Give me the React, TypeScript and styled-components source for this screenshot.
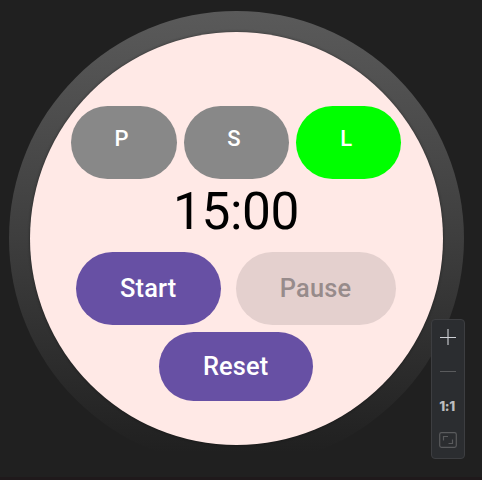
import React from "react";
import styled, { createGlobalStyle } from "styled-components";

const GlobalStyle = createGlobalStyle`
  * { box-sizing: border-box; }
  body { margin: 0; background: #202020; overflow: hidden; }
`;

const Preview = styled.main`
  position: relative;
  width: 482px;
  height: 480px;
  padding: 11px 0 0 9px;
  background: #202020;
  border-bottom: 3px solid #1f191b;
  font-family: Roboto, "Liberation Sans", sans-serif;
`;

const Bezel = styled.div`
  width: 455px;
  height: 455px;
  padding: 21px;
  border-radius: 50%;
  background: linear-gradient(180deg, #5a5a5a 0%, #3e3e3e 50%, #202020 97%);
`;

const Face = styled.section`
  width: 413px;
  height: 413px;
  padding: 73.6px 1px 0 0;
  border-radius: 50%;
  background: #ffe9e6;
  box-shadow: 0 0 3px rgba(0, 0, 0, 0.45);
  display: flex;
  flex-direction: column;
  align-items: center;
`;

const Row = styled.div<{ $gap: number }>`
  display: flex;
  gap: ${(p) => p.$gap}px;
`;

const Pill = styled.button<{ $w: number; $h: number; $bg: string; $color?: string }>`
  width: ${(p) => p.$w}px;
  height: ${(p) => p.$h}px;
  flex: none;
  padding: 0 0.6px 0.6px 0;
  border: 0;
  border-radius: 37px;
  display: flex;
  align-items: center;
  justify-content: center;
  background: ${(p) => p.$bg};
  color: ${(p) => p.$color ?? "#fff"};
  font: 500 25.4px/30px Roboto, "Liberation Sans", sans-serif;
  letter-spacing: 0.15px;
`;

const ModePill = styled(Pill)`
  font-size: 22px;
  padding: 0 4.4px 7px 0;
`;

const Time = styled.div`
  height: 72.8px;
  padding-top: 3px;
  font-size: 51.4px;
  line-height: 60px;
  letter-spacing: -0.4px;
  color: #000;
`;

const ResetRow = styled.div`
  margin-top: 7.2px;
`;

const ZoomBar = styled.aside`
  position: absolute;
  left: 431px;
  top: 319px;
  width: 34px;
  height: 140px;
  border: 1px solid #3d3e41;
  border-radius: 4px;
  background: #2b2d30;
  display: flex;
  flex-direction: column;
  align-items: center;
`;

const ZoomItem = styled.div<{ $h: number }>`
  width: 32px;
  height: ${(p) => p.$h}px;
  display: flex;
  align-items: center;
  justify-content: center;
  color: #bcbdbf;
  font: 800 13.5px/14px Inter, sans-serif;
  letter-spacing: -0.4px;
`;

const RatioLabel = styled.span`
  margin-right: 2px;
`;

export default function App() {
  return (
    <>
      <GlobalStyle />
      <Preview>
        <Bezel>
          <Face>
            <Row $gap={7}>
              <ModePill $w={105.6} $h={73.3} $bg="#888888">P</ModePill>
              <ModePill $w={105.2} $h={73.3} $bg="#888888">S</ModePill>
              <ModePill $w={105} $h={73.3} $bg="#00ff00">L</ModePill>
            </Row>
            <Time>15:00</Time>
            <Row $gap={14.6}>
              <Pill $w={145} $h={73} $bg="#6750a4">Start</Pill>
              <Pill $w={160.4} $h={73} $bg="#e4d0ce" $color="#978b8b">Pause</Pill>
            </Row>
            <ResetRow>
              <Pill $w={154} $h={69} $bg="#6750a4">Reset</Pill>
            </ResetRow>
          </Face>
        </Bezel>
        <ZoomBar>
          <ZoomItem $h={34}>
            <svg width="18" height="18" viewBox="0 0 18 18" stroke="#ced0d6" fill="none">
              <path d="M1 9.5H17M9 1V17" strokeWidth="1.1" />
            </svg>
          </ZoomItem>
          <ZoomItem $h={34}>
            <svg width="18" height="18" viewBox="0 0 18 18" stroke="#5a5b5d" fill="none">
              <path d="M1 9.5H17" />
            </svg>
          </ZoomItem>
          <ZoomItem $h={36}>
            <RatioLabel>1:1</RatioLabel>
          </ZoomItem>
          <ZoomItem $h={32}>
            <svg width="18" height="16" viewBox="0 0 18 16" stroke="#5a5b5d" fill="none">
              <rect x="0.7" y="0.7" width="16.6" height="14.6" rx="1.8" strokeWidth="1.2" />
              <path d="M4.5 8.5V4.5H9M9.5 11.5H13.5V7.5" strokeWidth="1.2" />
            </svg>
          </ZoomItem>
        </ZoomBar>
      </Preview>
    </>
  );
}
